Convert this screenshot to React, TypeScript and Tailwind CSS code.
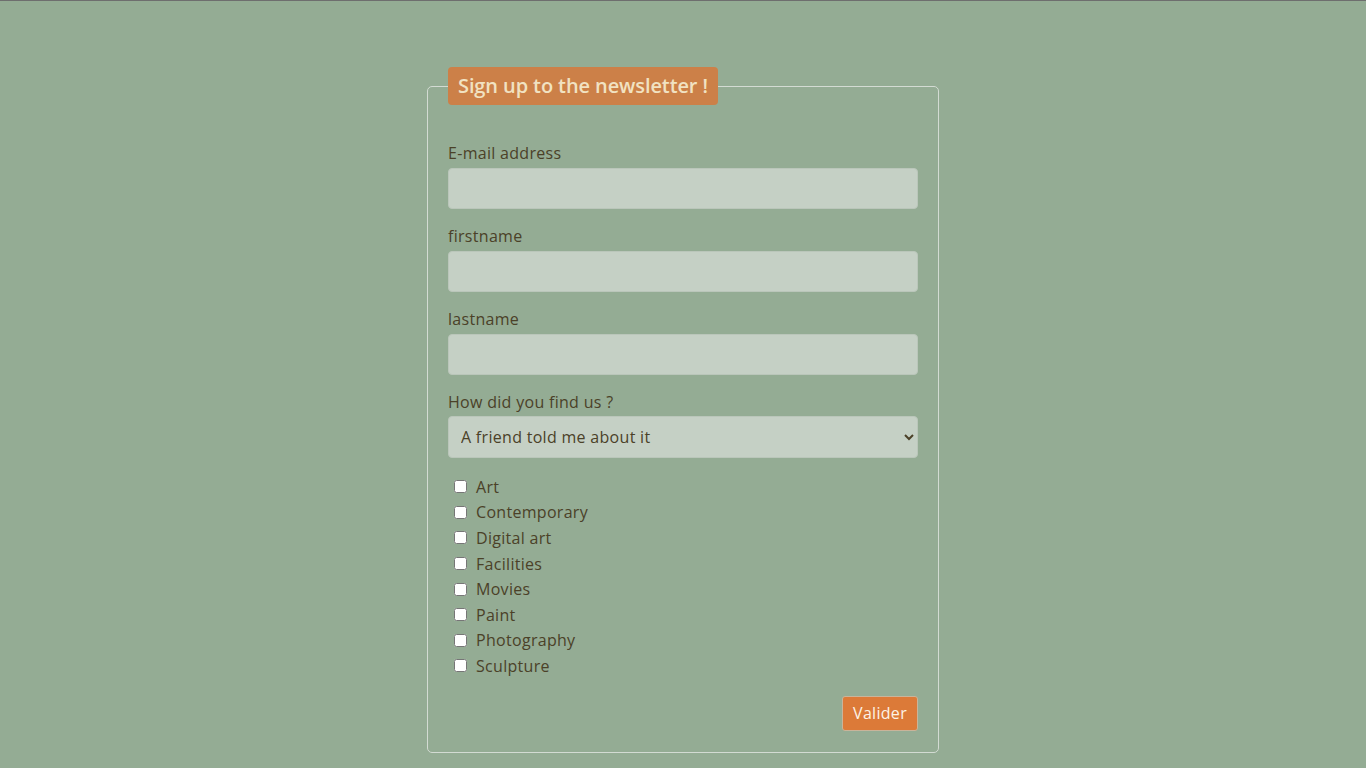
const topics = ["Art", "Contemporary", "Digital art", "Facilities", "Movies", "Paint", "Photography", "Sculpture"]

function Field({ label, id }: { label: string; id: string }) {
  return (
    <div className="flex flex-col mb-4">
      <label htmlFor={id} className="mb-1 leading-[22px]">
        {label}
      </label>
      <input
        id={id}
        type="text"
        className="h-[41px] w-full rounded-[4px] border border-[#bac6ba] bg-[#c5d0c5] px-3 outline-none"
      />
    </div>
  )
}

export default function App() {
  return (
    <div className="min-h-[768px] border-t border-[#6e6e6e] bg-[#94ac94] font-['Open_Sans',sans-serif] text-[16px] tracking-[0.3px] text-[#4b4128]">
      <form className="mx-auto w-[512px] pt-[66px] pb-4">
        <fieldset className="rounded-[5px] border border-[#d3dbd3] px-5 pt-[37px] pb-[21px]">
          <legend className="block h-[38px] rounded-[4px] bg-[#cc8048] px-[10px] text-[20px] font-semibold leading-[38px] tracking-[-0.1px] text-[#f1e2c2]">
            Sign up to the newsletter !
          </legend>

          <Field label="E-mail address" id="email" />
          <Field label="firstname" id="firstname" />
          <Field label="lastname" id="lastname" />

          <div className="flex flex-col">
            <label htmlFor="source" className="mb-[3px] leading-[22px]">
              How did you find us ?
            </label>
            <select
              id="source"
              className="h-[42px] w-full rounded-[4px] border border-[#bac6ba] bg-[#c5d0c5] pl-2 pr-2 text-[#4b4128] outline-none"
            >
              <option>A friend told me about it</option>
              <option>Social networks</option>
              <option>Search engine</option>
            </select>
          </div>

          <div className="mt-[16px] flex flex-col">
            {topics.map((t) => (
              <label key={t} className="flex h-[25.6px] items-center">
                <input type="checkbox" className="ml-[6px] mr-[9px] h-[13px] w-[13px]" />
                <span className="leading-[22px]">{t}</span>
              </label>
            ))}
          </div>

          <div className="mt-[17px] flex justify-end">
            <button
              type="button"
              className="h-[35px] rounded-[3px] border border-[#c9b49a] bg-[#dc7a38] px-[10px] text-[#fdf2e6]"
            >
              Valider
            </button>
          </div>
        </fieldset>
      </form>
    </div>
  )
}
